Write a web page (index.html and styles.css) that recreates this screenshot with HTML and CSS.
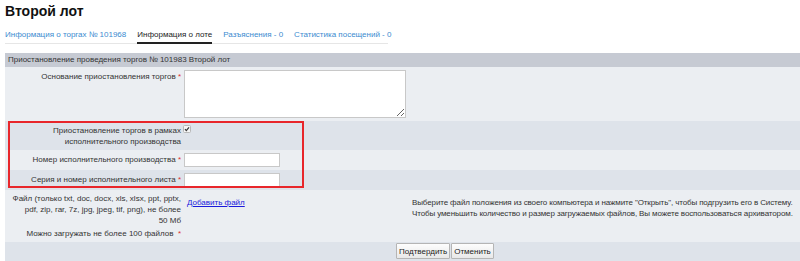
FILE: index.html
```html
<!DOCTYPE html>
<html lang="ru">
<head>
<meta charset="utf-8">
<title>Второй лот</title>
<link rel="stylesheet" href="styles.css">
</head>
<body>
<div class="page">
  <h1 class="title">Второй лот</h1>
  <nav class="tabs">
    <a class="tab" href="#">Информация о торгах № 101968</a>
    <a class="tab active" href="#">Информация о лоте</a>
    <a class="tab" href="#">Разъяснения - 0</a>
    <a class="tab" href="#">Статистика посещений - 0</a>
  </nav>
  <div class="panel">
    <div class="panel-head">Приостановление проведения торгов № 101983 Второй лот</div>
    <div class="row light">
      <div class="label">Основание приостановления торгов <span class="req">*</span></div>
      <div class="field"><textarea class="area"></textarea></div>
    </div>
    <div class="boxed">
      <div class="row dark">
        <div class="label">Приостановление торгов в рамках<br>исполнительного производства</div>
        <div class="field">
          <svg class="check" width="8" height="8" viewBox="0 0 8 8" aria-label="checkbox">
            <rect x="0.5" y="0.5" width="7" height="7" rx="1" fill="#f4f4f4" stroke="#b8b8b8"/>
            <path d="M2 4.2 L3.3 5.6 L6 2.3" fill="none" stroke="#333" stroke-width="1.2"/>
          </svg>
        </div>
      </div>
      <div class="row light">
        <div class="label">Номер исполнительного производства <span class="req">*</span></div>
        <div class="field"><input type="text" class="input"></div>
      </div>
      <div class="row dark">
        <div class="label">Серия и номер исполнительного листа <span class="req">*</span></div>
        <div class="field"><input type="text" class="input"></div>
      </div>
      <div class="highlight"></div>
    </div>
    <div class="row light file-row">
      <div class="label">
        <div>Файл (только txt, doc, docx, xls, xlsx, ppt, pptx,<br>pdf, zip, rar, 7z, jpg, jpeg, tif, png), не более<br>50 Мб</div>
        <div class="limit">Можно загружать не более 100 файлов&nbsp; <span class="req">*</span></div>
      </div>
      <div class="field file-field">
        <a class="add" href="#">Добавить файл</a>
        <div class="hint">Выберите файл положения из своего компьютера и нажмите "Открыть", чтобы подгрузить его в Систему.<br>Чтобы уменьшить количество и размер загружаемых файлов, Вы можете воспользоваться архиватором.</div>
      </div>
    </div>
    <div class="actions">
      <button class="btn" type="button">Подтвердить</button>
      <button class="btn" type="button">Отменить</button>
    </div>
  </div>
</div>
</body>
</html>
```
FILE: styles.css
```css
html, body {
  margin: 0;
  padding: 0;
  background: #fff;
  font-family: "Liberation Sans", Arial, sans-serif;
  font-size: 8px;
  color: #333;
}
.page {
  padding: 0 0 0 5px;
}
.title {
  margin: 0;
  padding-top: 3px;
  font-size: 14px;
  line-height: 16px;
  font-weight: bold;
  color: #111;
}
.tabs {
  display: flex;
  gap: 11px;
  margin-top: 10px;
  width: 383px;
  border-bottom: 1px solid #e6e6e6;
}
.tab {
  display: block;
  flex: none;
  white-space: nowrap;
  color: #3b8bd0;
  text-decoration: none;
  font-size: 8px;
  line-height: 12px;
  padding-bottom: 1px;
  border-bottom: 2px solid transparent;
  margin-bottom: -1px;
}
.tab.active {
  color: #222;
  border-bottom-color: #222;
}
.panel {
  margin-top: 9px;
  background: #ebeef2;
}
.panel-head {
  background: #c6cad3;
  height: 14px;
  line-height: 14px;
  padding-left: 3px;
  color: #333;
}
.row {
  display: grid;
  grid-template-columns: 176px 1fr;
  column-gap: 3px;
  padding: 3px 0;
}
.row.light { background: #ebeef2; }
.row.dark { background: #dee3ea; }
.label {
  text-align: right;
  line-height: 11px;
  color: #333;
}
.req { color: #e03030; }
.field { display: flex; align-items: flex-start; }
.area {
  display: block;
  box-sizing: border-box;
  width: 222px;
  height: 48px;
  margin: 0;
  border: 1px solid #c8c8c8;
  padding: 1px;
  resize: both;
}
.boxed { position: relative; }
.highlight {
  position: absolute;
  left: 3px;
  top: 0;
  width: 292px;
  height: 63px;
  border: 2px solid #e8262b;
  pointer-events: none;
}
.check {
  display: block;
  margin: 1px 0 0 -1px;
}
.input {
  box-sizing: border-box;
  width: 96px;
  height: 14px;
  margin: 0;
  padding: 0 1px;
  border: 1px solid #c8c8c8;
  font-size: 8px;
}
.row .label { padding-top: 1px; }
.file-row { padding: 2px 0 3px; }
.file-field {
  display: grid;
  grid-template-columns: 228px 1fr;
}
.add {
  color: #1a1adc;
  text-decoration: underline;
  margin-left: 3px;
  margin-top: 5px;
  justify-self: start;
  line-height: 11px;
}
.hint {
  margin-top: 5px;
  line-height: 11px;
  color: #333;
  white-space: nowrap;
  letter-spacing: -0.12px;
}
.limit { margin-top: 2px; }
.actions {
  background: #dee3ea;
  display: flex;
  gap: 1px;
  padding: 1px 0 2px 391px;
}
.btn {
  font-family: "Liberation Sans", Arial, sans-serif;
  font-size: 8px;
  height: 16px;
  padding: 0 2px;
  background: linear-gradient(#fdfdfd, #e8e8e8);
  border: 1px solid #b5b5b5;
  border-radius: 1px;
  color: #222;
}
```
